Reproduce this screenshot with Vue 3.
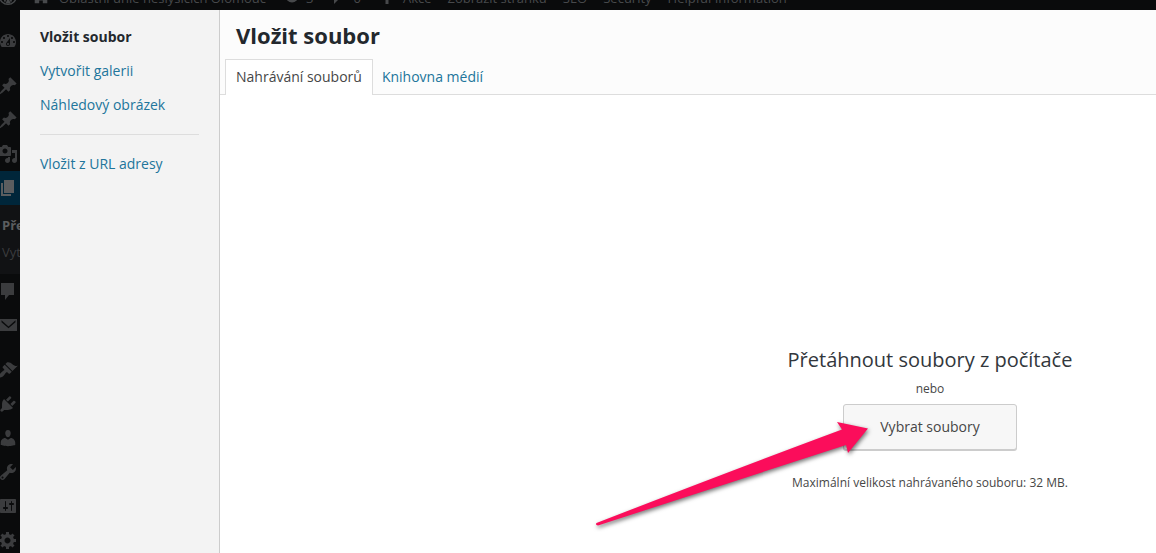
<script setup>
import { ref } from 'vue'

const topLinks = ['Akce', 'Zobrazit stránku', 'SEO', 'Security', 'Helpful Information']

const pin = 'M10.44 3.02l1.82-1.82 6.36 6.35-1.83 1.82c-1.05-.68-2.48-.57-3.41.36l-.75.75c-.92.93-1.04 2.35-.35 3.41l-1.83 1.82-2.41-2.41-2.8 2.79c-.42.42-3.38 2.71-3.8 2.29s1.86-3.39 2.28-3.81l2.79-2.79L4.1 9.36l1.83-1.82c1.05.69 2.48.57 3.4-.36l.75-.75c.93-.92 1.05-2.35.36-3.41z'

const bubble = 'M5 2h9c1.1 0 2 .9 2 2v7c0 1.1-.9 2-2 2h-2l-5 5v-5H5c-1.1 0-2-.9-2-2V4c0-1.1.9-2 2-2z'

const groups = [
  [
    { name: 'Nástěnka', d: 'M3.76 16h12.48c1.1-1.37 1.76-3.11 1.76-5 0-4.42-3.58-8-8-8s-8 3.58-8 8c0 1.89.66 3.63 1.76 5zM10 4c.55 0 1 .45 1 1s-.45 1-1 1-1-.45-1-1 .45-1 1-1zM6 6c.55 0 1 .45 1 1s-.45 1-1 1-1-.45-1-1 .45-1 1-1zm8 0c.55 0 1 .45 1 1s-.45 1-1 1-1-.45-1-1 .45-1 1-1zm-5.37 5.55L12 7v6c0 1.1-.9 2-2 2s-2-.9-2-2c0-.57.24-1.08.63-1.45zM4 10c.55 0 1 .45 1 1s-.45 1-1 1-1-.45-1-1 .45-1 1-1zm12 0c.55 0 1 .45 1 1s-.45 1-1 1-1-.45-1-1 .45-1 1-1zm-5 3c0-.55-.45-1-1-1s-1 .45-1 1 .45 1 1 1 1-.45 1-1z' },
  ],
  [
    { name: 'Příspěvky', d: pin },
    { name: 'Aktuality', d: pin },
    { name: 'Média', d: 'M13 11V4c0-.55-.45-1-1-1h-1.67L9 1H5L3.67 3H2c-.55 0-1 .45-1 1v7c0 .55.45 1 1 1h10c.55 0 1-.45 1-1zM7 4.5c1.38 0 2.5 1.12 2.5 2.5S8.38 9.5 7 9.5 4.5 8.38 4.5 7 5.62 4.5 7 4.5zM14 6h5v10.5c0 1.38-1.12 2.5-2.5 2.5S14 17.88 14 16.5s1.12-2.5 2.5-2.5c.17 0 .34.02.5.05V9h-3V6zm-4 8.05V13h2v3.5c0 1.38-1.12 2.5-2.5 2.5S7 17.88 7 16.5 8.12 14 9.5 14c.17 0 .34.02.5.05z' },
    { name: 'Stránky', active: true, d: 'M6 15V2h10v13H6zm-1 1h8v2H3V5h2v11z' },
    { name: 'Komentáře', d: 'M3 2h13v12h-5l-4 5v-5H3z' },
    { name: 'Zprávy', d: 'M2 4h17v12H2zM3.5 5.2l7 6.3 7-6.3v2l-7 6-7-6z' },
  ],
  [
    { name: 'Vzhled', d: 'M14.48 11.06L7.41 3.99l1.5-1.5c.5-.56 2.3-.47 3.51.32 1.21.8 1.43 1.28 2.91 2.1 1.18.64 2.45 1.26 4.45.85zm-.71.71L6.7 4.7 4.93 6.47c-.39.39-.39 1.02 0 1.41l1.06 1.06c.39.39.39 1.03 0 1.42-.6.6-1.43 1.11-2.21 1.69-.35.26-.7.53-1.01.84C1.43 14.23.4 16.08 1.4 17.07c.99 1 2.84-.03 4.18-1.36.31-.31.58-.66.85-1.02.57-.78 1.08-1.61 1.69-2.21.39-.39 1.02-.39 1.41 0l1.06 1.06c.39.39 1.02.39 1.41 0z' },
    { name: 'Pluginy', d: 'M13.11 4.36L9.87 7.6 8 5.73l3.24-3.24c.35-.34 1.05-.2 1.56.32.52.51.66 1.21.31 1.55zm-8 1.77l.91-1.12 9.01 9.01-1.19.84c-.71.71-2.63 1.16-3.82 1.16H6.14L4.9 17.26c-.59.59-1.54.59-2.12 0-.59-.58-.59-1.53 0-2.12l1.24-1.24v-3.88c0-1.13.4-3.19 1.09-3.89zm7.26 3.97l3.24-3.24c.34-.35 1.04-.21 1.55.31.52.51.66 1.21.31 1.55l-3.24 3.25z' },
    { name: 'Uživatelé', d: 'M10 9.25c-2.27 0-2.73-3.44-2.73-3.44C7 4.02 7.82 2 9.97 2c2.16 0 2.98 2.02 2.71 3.81 0 0-.41 3.44-2.68 3.44zm0 2.57L12.72 10c2.39 0 4.52 2.33 4.52 4.53v2.49s-3.65 1.13-7.24 1.13c-3.65 0-7.24-1.13-7.24-1.13v-2.49c0-2.25 1.94-4.48 4.47-4.48z' },
    { name: 'Nástroje', d: 'M16.68 9.77c-1.34 1.34-3.3 1.67-4.95.99l-5.41 6.52c-.99.99-2.59.99-3.58 0s-.99-2.59 0-3.57l6.52-5.42c-.68-1.65-.35-3.61.99-4.95 1.28-1.28 3.12-1.62 4.72-1.06l-2.89 2.89 2.82 2.82 2.86-2.87c.53 1.58.18 3.39-1.08 4.65zM3.81 16.21c.4.39 1.04.39 1.43 0 .4-.4.4-1.04 0-1.43-.39-.4-1.03-.4-1.43 0-.39.39-.39 1.03 0 1.43z' },
    { name: 'Nastavení', d: 'M18 16V4c0-.55-.45-1-1-1H3c-.55 0-1 .45-1 1v12c0 .55.45 1 1 1h14c.55 0 1-.45 1-1zM8 11h1c.55 0 1 .45 1 1s-.45 1-1 1H8v1.5c0 .28-.22.5-.5.5s-.5-.22-.5-.5V13H6c-.55 0-1-.45-1-1s.45-1 1-1h1V5.5c0-.28.22-.5.5-.5s.5.22.5.5V11zm5-2h-1c-.55 0-1-.45-1-1s.45-1 1-1h1V5.5c0-.28.22-.5.5-.5s.5.22.5.5V7h1c.55 0 1 .45 1 1s-.45 1-1 1h-1v5.5c0 .28-.22.5-.5.5s-.5-.22-.5-.5V9z' },
    { name: 'Možnosti', d: 'M18 12h-2.18c-.17.7-.44 1.35-.81 1.93l1.54 1.54-2.1 2.1-1.54-1.54c-.58.36-1.23.63-1.91.79V19H8v-2.18c-.68-.16-1.33-.43-1.91-.79l-1.54 1.54-2.12-2.12 1.54-1.54c-.36-.58-.63-1.23-.79-1.91H1V9.03h2.17c.16-.7.44-1.35.8-1.94L2.43 5.55l2.1-2.1 1.54 1.54c.58-.37 1.24-.64 1.93-.81V2h3v2.18c.68.16 1.33.43 1.91.79l1.54-1.54 2.12 2.12-1.54 1.54c.36.59.64 1.24.8 1.94H18V12zm-8.5 1.5c1.66 0 3-1.34 3-3s-1.34-3-3-3-3 1.34-3 3 1.34 3 3 3z' },
  ],
]

const tab = ref('upload')
</script>

<template>
  <div class="screen">
    <header class="topbar">
      <svg class="wp" viewBox="0 0 20 20" aria-hidden="true">
        <circle cx="10" cy="10" r="8.4" fill="none" stroke="currentColor" stroke-width="1.4" />
        <path d="M3 7l4 10 2.4-7L8.300 7zM9 7l4 10 3-9-2-3zM10.200 11l-2.600 6.500h5z" fill="currentColor" />
      </svg>
      <svg class="home" viewBox="0 0 20 20" aria-hidden="true">
        <path d="M10 3l8 7h-1v8h-5v-3H8v3H3v-8H2z" fill="currentColor" />
      </svg>
      <a class="site" href="#">Oblastní unie neslyšících Olomouc</a>
      <span class="count">
        <svg viewBox="0 0 20 20" aria-hidden="true">
          <circle cx="10" cy="10" r="5" fill="none" stroke="currentColor" stroke-width="3" />
        </svg>
        3
      </span>
      <span class="count comments">
        <svg viewBox="0 0 20 20" aria-hidden="true"><path :d="bubble" fill="currentColor" /></svg>
        0
      </span>
      <svg class="plus" viewBox="0 0 20 20" aria-hidden="true">
        <path d="M8.500 5h3v5h5v3h-5v5h-3v-5h-5v-3h5z" fill="currentColor" />
      </svg>
      <a v-for="link in topLinks" :key="link" class="top-link" href="#">{{ link }}</a>
    </header>

    <nav class="rail" aria-label="Administrace">
      <div v-for="(group, g) in groups" :key="g" class="group">
        <template v-for="item in group" :key="item.name">
          <a href="#" class="item" :class="{ active: item.active }" :aria-label="item.name">
            <svg viewBox="0 0 20 20" aria-hidden="true">
              <path :d="item.d" fill="currentColor" fill-rule="evenodd" />
            </svg>
          </a>
          <div v-if="item.active" class="submenu">
            <a href="#" class="current">Přehled</a>
            <a href="#">Vytvořit</a>
          </div>
        </template>
      </div>
    </nav>

    <div class="modal" role="dialog" aria-labelledby="modal-title">
      <nav class="menu">
        <a href="#" class="current">Vložit soubor</a>
        <a href="#">Vytvořit galerii</a>
        <a href="#">Náhledový obrázek</a>
        <hr />
        <a href="#">Vložit z URL adresy</a>
      </nav>
      <main class="frame">
        <div class="head">
          <h1 id="modal-title">Vložit soubor</h1>
          <div class="tabs" role="tablist">
            <button type="button" role="tab" :aria-selected="tab === 'upload'" @click="tab = 'upload'">Nahrávání souborů</button>
            <button type="button" role="tab" :aria-selected="tab === 'library'" @click="tab = 'library'">Knihovna médií</button>
          </div>
        </div>
        <section class="uploader">
          <h2>Přetáhnout soubory z počítače</h2>
          <p class="or">nebo</p>
          <div class="pick">
            <button type="button" class="browse">Vybrat soubory</button>
            <svg class="arrow" viewBox="0 0 300 130" aria-hidden="true">
              <path d="M13.500 119 Q12 121 15 121.500 L263 41 L265 49 L285 24.500 L254 18 L259 25.500 Q150 66 13.500 119z" fill="#fb0d5b" />
            </svg>
          </div>
          <p class="limit">Maximální velikost nahrávaného souboru: 32 MB.</p>
        </section>
      </main>
    </div>
  </div>
</template>

<style>
body {
  margin: 0;
  background: #0a0b0c;
}
</style>

<style scoped>
.screen {
  display: grid;
  grid-template-columns: 20px minmax(0, 1fr);
  grid-template-rows: 10px minmax(0, 1fr);
  height: 100vh;
  overflow: hidden;
  background: #0a0b0c;
  font-family: "Open Sans", "Noto Sans", sans-serif;
}
a {
  text-decoration: none;
  color: inherit;
}
h1, h2, p {
  margin: 0;
}
.topbar {
  grid-column: 1 / -1;
  display: flex;
  align-items: flex-end;
  overflow: hidden;
  color: #47494b;
  font-size: 13px;
  line-height: 24px;
  white-space: nowrap;
}
.topbar svg {
  width: 20px;
  height: 20px;
  flex: none;
}
.topbar .wp {
  margin: 0 14px 4px -2px;
}
.topbar .home {
  width: 18px;
  margin: 0 9px 4px 0;
}
.site {
  margin-right: 16px;
}
.count {
  display: flex;
  gap: 4px;
  margin-right: 14px;
}
.comments {
  gap: 6px;
  margin-right: 16px;
}
.topbar .plus {
  margin: 0 6px 4px 0;
}
.top-link {
  margin-right: 16px;
}
.rail {
  overflow: hidden;
  padding-top: 14px;
  color: #3b3c3e;
}
.group {
  margin-bottom: 11px;
}
.item {
  display: flex;
  align-items: center;
  height: 34px;
}
.item svg {
  flex: none;
  width: 20px;
  height: 20px;
  margin-left: -2px;
}
.item.active {
  background: #00263a;
  color: #5b5d5f;
}
.submenu {
  display: flex;
  flex-direction: column;
  padding: 7px 0 8px 2px;
  background: #111214;
  font-size: 13px;
  line-height: 27px;
  white-space: nowrap;
  overflow: hidden;
}
.submenu .current {
  color: #5b5d5f;
  font-weight: 700;
}
.modal {
  display: grid;
  grid-template-columns: 200px minmax(0, 1fr);
  background: #fff;
}
.menu {
  padding: 10px 20px;
  background: #f3f3f3;
  border-right: 1px solid #ccc;
  font-size: 14px;
  line-height: 18px;
  color: #21759b;
}
.menu a {
  display: block;
  padding: 8px 0;
}
.menu .current {
  color: #23282d;
  font-weight: 700;
}
.menu hr {
  margin: 12px 0;
  border: 0;
  border-top: 1px solid #ddd;
}
.frame {
  display: flex;
  flex-direction: column;
}
.head {
  background: #fcfcfc;
  border-bottom: 1px solid #ddd;
}
h1 {
  padding: 1px 16px 0;
  color: #23282d;
  font-size: 22px;
  font-weight: 700;
  line-height: 48px;
}
.tabs {
  display: flex;
  margin: 0 5px -1px;
}
.tabs button {
  border: 1px solid transparent;
  border-bottom: 0;
  padding: 7px 10px 9px;
  background: transparent;
  color: #21759b;
  font: inherit;
  font-size: 14px;
  line-height: 19px;
}
.tabs button + button {
  padding-left: 8px;
}
.tabs button[aria-selected="true"] {
  border-color: #ddd;
  background: #fff;
  color: #464646;
}
.uploader {
  display: flex;
  flex: 1;
  flex-direction: column;
  align-items: center;
  justify-content: flex-end;
  padding: 0 0 60px 484px;
  color: #464646;
  font-size: 12px;
  line-height: 20px;
  white-space: nowrap;
}
h2 {
  color: #32373c;
  font-size: 20px;
  font-weight: 400;
  line-height: 28px;
}
.or {
  margin: 5px 0;
}
.pick {
  position: relative;
  margin-bottom: 23px;
}
.browse {
  height: 46px;
  padding: 0 36px;
  border: 1px solid #ccc;
  border-radius: 3px;
  background: #f7f7f7;
  box-shadow: 0 1px 0 #ccc;
  color: #464646;
  font: inherit;
  font-size: 14px;
}
.arrow {
  position: absolute;
  top: 0;
  left: -260px;
  width: 300px;
  height: 130px;
  pointer-events: none;
  filter: drop-shadow(1px 2px 2px rgba(0, 0, 0, 0.55));
}
</style>
